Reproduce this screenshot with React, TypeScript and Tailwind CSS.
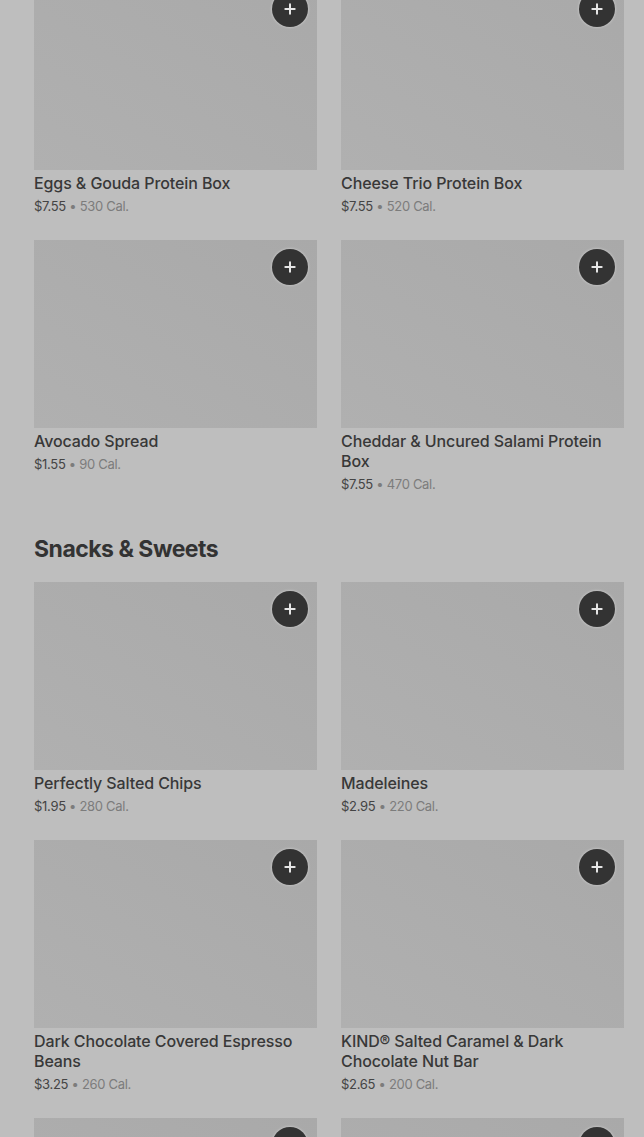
import { Plus } from 'lucide-react'

type Item = { name: string; price: string; cal: string }

const PROTEIN: Item[] = [
  { name: 'Eggs & Gouda Protein Box', price: '$7.55', cal: '530 Cal.' },
  { name: 'Cheese Trio Protein Box', price: '$7.55', cal: '520 Cal.' },
  { name: 'Avocado Spread', price: '$1.55', cal: '90 Cal.' },
  { name: 'Cheddar & Uncured Salami Protein Box', price: '$7.55', cal: '470 Cal.' },
]

const SNACKS: Item[] = [
  { name: 'Perfectly Salted Chips', price: '$1.95', cal: '280 Cal.' },
  { name: 'Madeleines', price: '$2.95', cal: '220 Cal.' },
  { name: 'Dark Chocolate Covered Espresso Beans', price: '$3.25', cal: '260 Cal.' },
  { name: 'KIND® Salted Caramel & Dark Chocolate Nut Bar', price: '$2.65', cal: '200 Cal.' },
  { name: '', price: '', cal: '' },
  { name: '', price: '', cal: '' },
]

function Card({ item }: { item: Item }) {
  return (
    <div>
      <div className="relative h-[188px] bg-gradient-to-tr from-[#b0b0b0] to-[#a9a9a9]">
        <button className="absolute right-[9px] top-[9px] flex h-9 w-9 items-center justify-center rounded-full bg-[#333333] text-[#e6e6e6] shadow-[0_0_2px_1px_rgba(255,255,255,0.25)]">
          <Plus size={16} strokeWidth={3} />
        </button>
      </div>
      {item.name && (
        <div className="pt-[3px]">
          <h3 className="text-[16px] font-medium leading-5 tracking-[-0.1px] text-[#383838]">{item.name}</h3>
          <p className="mt-[3px] text-[13px] leading-5 tracking-[-0.3px] text-[#444444]">
            {item.price} <span className="text-[#7c7c7c]">• {item.cal}</span>
          </p>
        </div>
      )}
    </div>
  )
}

export default function App() {
  return (
    <div className="h-[1137px] overflow-hidden bg-[#bebebe] pl-[34px] pr-5 font-['Inter',sans-serif]">
      <div className="-mt-[18px] grid grid-cols-2 gap-6">
        {PROTEIN.map((it, i) => <Card key={i} item={it} />)}
      </div>
      <h2 className="mt-[39px] mb-[17px] text-[23px] font-bold leading-8 tracking-[-0.5px] text-[#333333]">
        Snacks &amp; Sweets
      </h2>
      <div className="grid grid-cols-2 gap-6">
        {SNACKS.map((it, i) => <Card key={i} item={it} />)}
      </div>
    </div>
  )
}
